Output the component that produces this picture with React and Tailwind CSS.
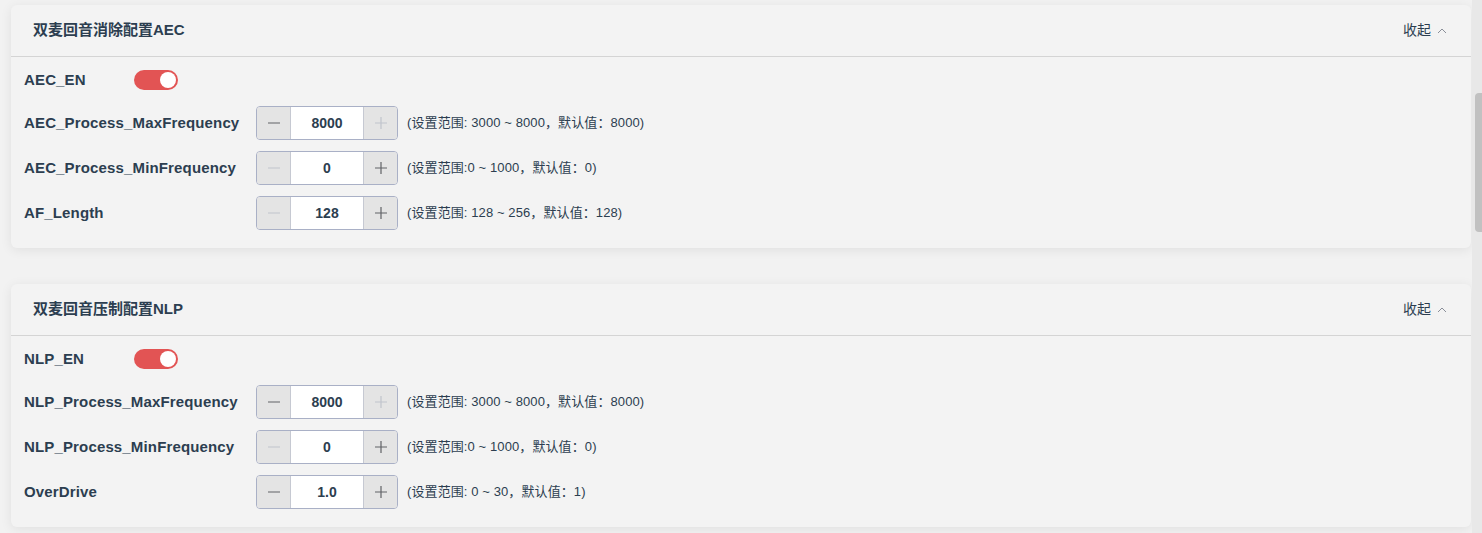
const font = { fontFamily: '"Liberation Sans", "Noto Sans CJK SC", sans-serif' }

const sections = [
  {
    title: '双麦回音消除配置AEC',
    toggle: 'AEC_EN',
    rows: [
      { label: 'AEC_Process_MaxFrequency', value: '8000', minusOn: true, plusOn: false, hint: '(设置范围: 3000 ~ 8000，默认值：8000)' },
      { label: 'AEC_Process_MinFrequency', value: '0', minusOn: false, plusOn: true, hint: '(设置范围:0 ~ 1000，默认值：0)' },
      { label: 'AF_Length', value: '128', minusOn: false, plusOn: true, hint: '(设置范围: 128 ~ 256，默认值：128)' },
    ],
  },
  {
    title: '双麦回音压制配置NLP',
    toggle: 'NLP_EN',
    rows: [
      { label: 'NLP_Process_MaxFrequency', value: '8000', minusOn: true, plusOn: false, hint: '(设置范围: 3000 ~ 8000，默认值：8000)' },
      { label: 'NLP_Process_MinFrequency', value: '0', minusOn: false, plusOn: true, hint: '(设置范围:0 ~ 1000，默认值：0)' },
      { label: 'OverDrive', value: '1.0', minusOn: true, plusOn: true, hint: '(设置范围: 0 ~ 30，默认值：1)' },
    ],
  },
]

function Stepper({ value, minusOn, plusOn }) {
  return (
    <div className="flex h-[34px] w-[142px] rounded-[4px] border border-[#a9b0c6] overflow-hidden">
      <button className={`w-[34px] bg-[#e4e4e4] border-r border-[#c6c9d2] flex items-center justify-center ${minusOn ? 'text-[#606266]' : 'text-[#c0c4cc]'}`}>
        <svg width="14" height="14" viewBox="0 0 14 14"><path d="M1 7h12" stroke="currentColor" strokeWidth="1.2" /></svg>
      </button>
      <div className="flex-1 bg-white flex items-center justify-center text-[14px] font-bold text-[#2c3e50]">{value}</div>
      <button className={`w-[34px] bg-[#e4e4e4] border-l border-[#c6c9d2] flex items-center justify-center ${plusOn ? 'text-[#606266]' : 'text-[#c0c4cc]'}`}>
        <svg width="14" height="14" viewBox="0 0 14 14"><path d="M1 7h12M7 1v12" stroke="currentColor" strokeWidth="1.2" /></svg>
      </button>
    </div>
  )
}

function Section({ title, toggle, rows }) {
  return (
    <div className="bg-[#f3f3f3] rounded-[6px] shadow-[0_2px_12px_rgba(0,0,0,0.08)]">
      <div className="h-[52px] pl-[22px] pr-[24px] flex items-center justify-between border-b border-[#d4d4d4]">
        <span className="text-[15px] font-bold text-[#2c3e50]">{title}</span>
        <span className="flex items-center gap-[6px] text-[14px] text-[#2c3e50]">
          收起
          <svg width="10" height="10" viewBox="0 0 10 10"><path d="M1 7l4-4 4 4" fill="none" stroke="#8a8f99" strokeWidth="1" /></svg>
        </span>
      </div>
      <div className="pl-[13px] pt-[8px] pb-[18px] flex flex-col gap-[11px]">
        <div className="flex items-center h-[30px]">
          <span className="w-[110px] text-[15px] font-bold tracking-[0.15px] text-[#2c3e50]">{toggle}</span>
          <div className="w-[44px] h-[20px] rounded-full bg-[#e25454] flex items-center justify-end pr-[2px]">
            <div className="w-[16px] h-[16px] rounded-full bg-white" />
          </div>
        </div>
        {rows.map((r) => (
          <div key={r.label} className="flex items-center">
            <span className="w-[232px] text-[15px] font-bold tracking-[0.15px] text-[#2c3e50]">{r.label}</span>
            <Stepper value={r.value} minusOn={r.minusOn} plusOn={r.plusOn} />
            <span className="ml-[9px] text-[13px] tracking-[0.1px] text-[#2c3e50]">{r.hint}</span>
          </div>
        ))}
      </div>
    </div>
  )
}

export default function App() {
  return (
    <div className="flex h-[533px] w-[1482px] bg-[#f2f2f2] overflow-hidden" style={font}>
      <div className="flex-1 pl-[11px] pr-[1px] pt-[5px] flex flex-col gap-[36px]">
        {sections.map((s) => (
          <Section key={s.title} {...s} />
        ))}
      </div>
      <div className="w-[10px] bg-[#e8e8e8] pl-[3px] pt-[93px]">
        <div className="h-[139px] rounded-l-[4px] bg-[#c1c1c1]" />
      </div>
    </div>
  )
}
